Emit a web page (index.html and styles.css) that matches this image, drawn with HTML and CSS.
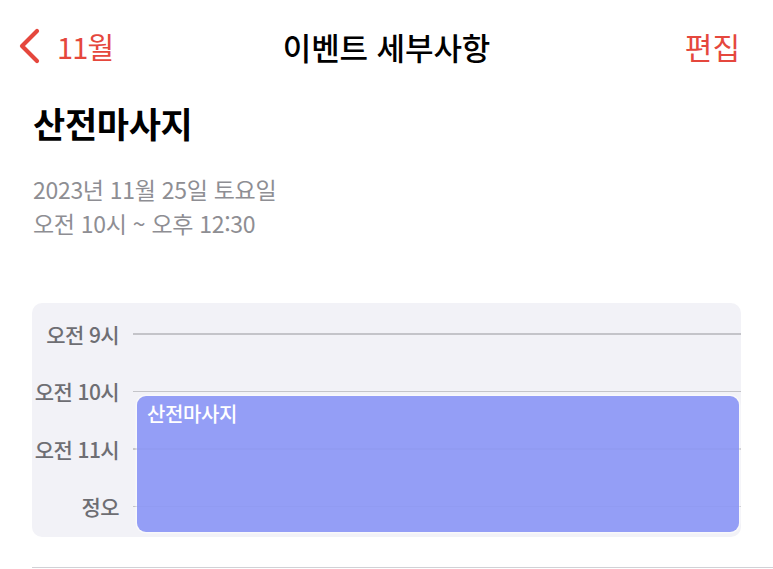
FILE: index.html
```html
<!DOCTYPE html>
<html lang="ko">
<head>
<meta charset="utf-8">
<title>이벤트 세부사항</title>
<link rel="stylesheet" href="styles.css">
</head>
<body>
<div class="screen">
  <header class="navbar">
    <div class="nav-left">
      <svg class="chevron" width="24" height="36" viewBox="0 0 24 36" aria-hidden="true">
        <path d="M20 3 L5 18 L20 33" fill="none" stroke="#e5473d" stroke-width="4.2" stroke-linecap="round" stroke-linejoin="round"/>
      </svg>
      <span class="nav-back">11월</span>
    </div>
    <div class="nav-title">이벤트 세부사항</div>
    <div class="nav-right">편집</div>
  </header>

  <section class="event-info">
    <h1 class="event-title">산전마사지</h1>
    <p class="event-date">2023년 11월 25일 토요일</p>
    <p class="event-date">오전 10시 ~ 오후 12:30</p>
  </section>

  <section class="timeline">
    <div class="hour-row"><span class="hour-label">오전 9시</span><span class="hour-line"></span></div>
    <div class="hour-row"><span class="hour-label">오전 10시</span><span class="hour-line"></span></div>
    <div class="hour-row"><span class="hour-label">오전 11시</span><span class="hour-line"></span></div>
    <div class="hour-row"><span class="hour-label">정오</span><span class="hour-line"></span></div>
    <div class="event-block">산전마사지</div>
  </section>

  <div class="separator"></div>
</div>
</body>
</html>
```

FILE: styles.css
```css
* {
  box-sizing: border-box;
}

html, body {
  margin: 0;
  padding: 0;
  background: #ffffff;
}

body {
  font-family: "Noto Sans CJK KR", "Noto Sans", "Liberation Sans", sans-serif;
  color: #000000;
  width: 773px;
  height: 569px;
  overflow: hidden;
}

.screen {
  display: flex;
  flex-direction: column;
}

.navbar {
  height: 92px;
  display: grid;
  grid-template-columns: 1fr auto 1fr;
  align-items: center;
  padding: 0 33px;
}

.nav-left {
  display: flex;
  align-items: center;
  gap: 16px;
  margin-left: -16px;
  color: #e5473d;
}

.chevron {
  display: block;
}

.nav-back {
  font-size: 29px;
  line-height: 1;
  letter-spacing: -0.8px;
}

.nav-title {
  font-size: 31px;
  font-weight: 500;
  line-height: 1;
  letter-spacing: -0.1px;
}

.nav-right {
  justify-self: end;
  font-size: 30px;
  line-height: 1;
  color: #e5473d;
}

.event-info {
  padding: 10px 33px 0;
}

.event-title {
  margin: 0 0 28px;
  font-size: 35px;
  font-weight: 700;
  line-height: 42px;
  letter-spacing: -0.3px;
}

.event-date {
  margin: 0;
  font-size: 23px;
  line-height: 34px;
  color: #8e8e93;
  letter-spacing: -0.3px;
}

.timeline {
  position: relative;
  margin: 63px 32px 0;
  padding: 2px 0;
  background: #f2f2f7;
  border-radius: 10px;
  display: flex;
  flex-direction: column;
}

.hour-row {
  height: 57.5px;
  display: flex;
  align-items: center;
  gap: 14px;
}

.hour-label {
  width: 87px;
  text-align: right;
  font-size: 21px;
  font-weight: 500;
  color: #6e6e73;
  letter-spacing: -0.6px;
  white-space: nowrap;
}

.hour-line {
  flex: 1;
  height: 1.5px;
  background: #c4c4c9;
}

.event-block {
  position: absolute;
  top: 93px;
  left: 105px;
  right: 2px;
  bottom: 5px;
  background: rgba(140, 151, 245, 0.92);
  border-radius: 9px;
  box-shadow: 0 0 0 1.5px rgba(255, 255, 255, 0.45);
  color: #ffffff;
  font-size: 20px;
  font-weight: 500;
  line-height: 24px;
  padding: 6px 10px;
  letter-spacing: -0.4px;
}

.separator {
  margin: 30px 0 0 32px;
  height: 1px;
  background: #d1d1d6;
}
```
